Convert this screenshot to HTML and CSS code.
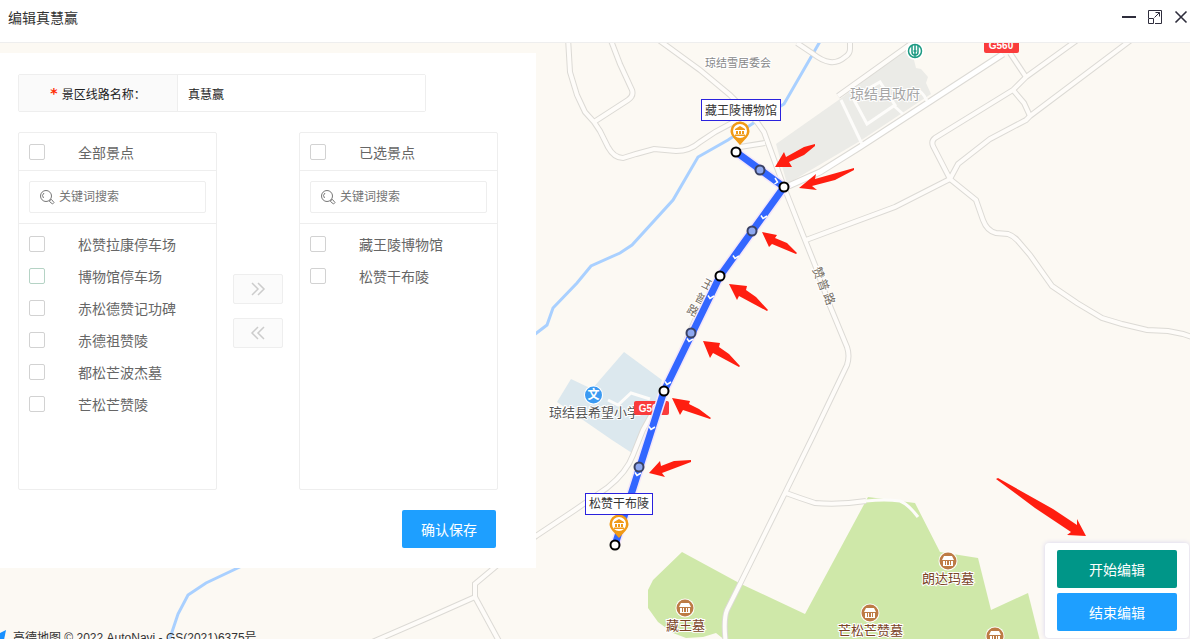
FILE: index.html
```html
<!DOCTYPE html>
<html lang="zh-CN">
  <head>
    <meta charset="UTF-8" />
    <meta name="viewport" content="width=device-width, initial-scale=1.0" />
    <title>编辑真慧赢</title>
    <link rel="stylesheet" href="styles.css">
  </head>
  <body>
    <header class="title_bar">
      <h1>编辑真慧赢</h1>
      <div class="window_btns">
        <button type="button" aria-label="最小化">
          <svg width="16" height="16" viewBox="0 0 16 16"><path d="M1 8h14" stroke-width="2" /></svg>
        </button>
        <button type="button" aria-label="最大化">
          <svg width="16" height="16" viewBox="0 0 16 16"><path d="M1.500 9V1.500h13v13H8M1.500 9.500h5v5h-5zM7.500 8.500l5-5M8.500 3.500h4v4" /></svg>
        </button>
        <button type="button" aria-label="关闭">
          <svg width="16" height="16" viewBox="0 0 16 16"><path d="M2.500 2.500l11 11M13.500 2.500l-11 11" stroke-width="1.600" /></svg>
        </button>
      </div>
    </header>

    <main class="map_area">
      <svg class="map" viewBox="0 43 1190 596" preserveAspectRatio="xMinYMin slice">
        <defs>
          <g id="roads">
            <path d="M568 38L570 72 577 95 585 112 594 122 600 131 608 147Q614 158 623 158L636 154 654 149 676 151 Q690 151 700 142L715 132 745 116" />
            <path d="M610 38L620 64 632 90Q634 96 628 100L594 122" />
            <path d="M656 38L700 70 730 95 757 122 764 132 784 187" />
            <path d="M740 147L765 143" />
            <path d="M797 43L812 53Q822 61 830 62T845 57Q850 54 850 49V38" />
            <path d="M838 96L866 76 912 43" />
            <path d="M1010 53L1026 77" />
            <path d="M1080 38L1026 77 1013 90 935 138Q931 141 933 146L950 179 976 200 983 220Q987 231 996 233L1008 234Q1014 236 1018 241L1030 255 1052 286 1077 303 1102 318 1122 324 1147 330 1168 331 1183 334 1195 338" />
            <path d="M1013 90L1024 103 1030 116" />
            <path d="M1135 37L1030 116 1026 120 990 139 958 164 950 179 895 207 806 240" />
            <path d="M784 187L797 220 815 265 830 306 847 347Q850 356 847 365L812 438 785 493 740 584 727 610Q723 620 726 645" />
            <path d="M786 493L800 498 815 503Q840 505 866 501" />
            <path d="M720 276L695 320 665 390 643 430 633 455Q627 472 607 488L575 510 536 536 500 563 475 584V597L430 617 370 643" />
            <path d="M475 597L500 643" />
          </g>
          <g id="pin">
            <path d="M-9.500 0A9.500 9.500 0 0 1 9.500 0C9.500 5 5 8 0 14-5 8-9.500 5-9.500 0Z" fill="#f09a16" />
            <circle r="7" fill="#fff" />
            <path d="M-5-2L0-5 5-2V-1H-5ZM-4 0h2v3h-2zM-1 0h2v3h-2zM2 0h2v3h-2zM-5 3.500h10v1.500h-10z" fill="#f09a16" />
          </g>
          <g id="tomb">
            <circle r="9.500" fill="#fff" />
            <circle r="8.500" fill="#bd7b45" />
            <path d="M-4-5h8l2 4h-12zM-5 0h2v5h-2zM-2 0h1v5h-1zM1 0h1v5h-1zM3 0h2v5h-2zM-5 4h10v1h-10z" fill="#fff" />
          </g>
          <path id="chevron" d="M-3-1.500L-1 1.500 3-1" />
        </defs>

        <rect y="43" width="1190" height="596" fill="#fcf9f3" />

        <!-- land areas -->
        <path class="block" d="M776 144L840 99 860 84 905 49 913 56 916 68 921 69 928 77 926 83 931 94 860 141 787 184Z" />
        <path class="school" d="M624 352L662 380 655 404 632 453 612 440 557 402 571 379 592 389Z" />
        <path class="park" d="M682 552L653 580 648 590V608L658 622 673 633 686 638 703 637 716 633 726 641H1040L1028 593 991 610 978 558 940 552 915 503 868 497 805 614 741 584Z" />

        <!-- river -->
        <path class="river" d="M822 38L784 104 752 124 728 140 698 157 673 200 632 245 620 253 591 266 577 283 553 308 547 325 530 338" />
        <path class="river" d="M244 565L206 583 188 595 178 614 169 641" />

        <!-- roads -->
        <use href="#roads" class="road_edge" />
        <use href="#roads" class="road_fill" />
        <path class="road_edge main" d="M784 188L820 172 860 147 1003 54" />
        <path class="road_fill main" d="M784 188L820 172 860 147 1003 54" />
        <path class="lane" d="M841 100L862 144M853 98L867 124 895 105 880 82 862 92M893 105L903 114M916 90Q922 90 927 101" />
        <path class="lane" d="M608 400L618 405 631 393 650 399M866 501Q885 499 900 501 908 504 918 517" />

        <!-- place names -->
        <text class="place small" x="705" y="67">琼结雪居委会</text>
        <text class="place gov" x="850" y="99">琼结县政府</text>
        <text class="place dark" x="549" y="417">琼结县希望小学</text>
        <g class="place road_name">
          <text transform="translate(818 273) rotate(70)">赞</text>
          <text transform="translate(823 285) rotate(70)">普</text>
          <text transform="translate(829 299) rotate(70)">路</text>
          <text transform="translate(708 285) rotate(28)">王</text>
          <text transform="translate(701 299) rotate(28)">普</text>
          <text transform="translate(693 311) rotate(28)">路</text>
        </g>

        <g transform="translate(593.500 395)">
          <circle r="9.500" fill="#fff" />
          <circle r="8.500" fill="#3b9af2" />
          <text class="icon_text" y="4">文</text>
        </g>
        <g transform="translate(915 51)">
          <circle r="9" fill="#fff" />
          <circle r="6.500" fill="none" stroke="#1c9a83" stroke-width="1.500" />
          <path d="M-3-6V1Q-3 4 0 4T3 1V-6M0-6V6M-1.500 0h3" fill="none" stroke="#1c9a83" stroke-width="1.500" />
        </g>

        <rect class="road_badge" x="984" y="38" width="35" height="15" rx="2" />
        <text class="badge_text" x="1001" y="49">G560</text>
        <rect class="road_badge" x="634" y="401" width="35" height="14" rx="2" />
        <text class="badge_text" x="651" y="412">G560</text>

        <use href="#tomb" x="685" y="608" />
        <use href="#tomb" x="948" y="561" />
        <use href="#tomb" x="870" y="613" />
        <use href="#tomb" x="995" y="636" />
        <text class="place tomb_name" x="666" y="630">藏王墓</text>
        <text class="place tomb_name" x="922" y="583">朗达玛墓</text>
        <text class="place tomb_name" x="838" y="635">芒松芒赞墓</text>

        <!-- editable route -->
        <path class="route_glow" d="M736 152L784 187 720 276 664 391 615 545" />
        <path class="route" d="M736 152L784 187 720 276 664 391 615 545" />
        <g class="chevrons">
          <use href="#chevron" transform="translate(776 181) rotate(-90)" />
          <use href="#chevron" x="764" y="217" />
          <use href="#chevron" x="736" y="257" />
          <use href="#chevron" x="711" y="297" />
          <use href="#chevron" x="690" y="340" />
          <use href="#chevron" x="668" y="383" />
          <use href="#chevron" x="652" y="428" />
          <use href="#chevron" x="638" y="474" />
        </g>
        <use href="#pin" x="740" y="131" />
        <use href="#pin" x="619" y="524" />
        <g class="mid_points">
          <circle cx="760" cy="170" r="4.500" />
          <circle cx="752" cy="231" r="4.500" />
          <circle cx="691" cy="333" r="4.500" />
          <circle cx="639" cy="467" r="4.500" />
        </g>
        <g class="points">
          <circle cx="736" cy="152" r="4.500" />
          <circle cx="784" cy="187" r="4.500" />
          <circle cx="720" cy="276" r="4.500" />
          <circle cx="664" cy="391" r="4.500" />
          <circle cx="615" cy="545" r="4.500" />
        </g>
        <rect class="tag" x="701.500" y="99.500" width="79" height="21" />
        <text class="tag_text" x="705" y="115">藏王陵博物馆</text>
        <rect class="tag" x="585.500" y="493.500" width="67" height="21" />
        <text class="tag_text" x="589" y="508">松赞干布陵</text>

        <!-- red arrows -->
        <g class="arrows">
          <path d="M775 167L784 152 786 157 804 147 815 144 815 146 804 155 789 162 792 167Z" />
          <path d="M799 188L816 174 815 179 854 168 854 170 835 180 812 186 817 190Z" />
          <path d="M762 232L777 235 775 238 787 243 797 253 796 254 772 244 769 247Z" />
          <path d="M729 284L747 286 746 290 756 297 768 310 767 311 739 296 737 300Z" />
          <path d="M703 341L720 343 719 347 729 354 740 366 739 367 713 353 710 358Z" />
          <path d="M672 398L690 401 689 404 699 409 711 418 710 419 683 410 680 415Z" />
          <path d="M649 473L660 461 661 466 674 461 691 460 691 462 662 473 665 477Z" />
          <path d="M1086 536L1077 519 1077 525 1053 509 998 478 996 479 1035 508 1071 532 1067 535Z" />
        </g>

        <path d="M0 633L6 630 4 640H0Z" fill="#1890ff" />
        <text class="copyright" x="13" y="642">高德地图 © 2022 AutoNavi - GS(2021)6375号</text>
      </svg>

      <form class="edit_panel">
        <div class="name_row">
          <label for="line_name"><span class="must">*</span>景区线路名称：</label>
          <input type="text" id="line_name" name="line_name" value="真慧赢" />
        </div>

        <div class="transfer">
          <section class="transfer_box">
            <label class="item box_head"><input type="checkbox" />全部景点</label>
            <div class="search_row">
              <div class="search_box">
                <svg width="16" height="16" viewBox="0 0 16 16"><circle cx="7" cy="7" r="5.500" /><path d="M4.500 9A3.500 3.500 0 0 1 5 4M11 11l1.500-.5 2.500 3-1.500 1.500-3-2.500z" /></svg>
                <input type="text" placeholder="关键词搜索" aria-label="搜索全部景点" />
              </div>
            </div>
            <ul>
              <li><label class="item"><input type="checkbox" />松赞拉康停车场</label></li>
              <li><label class="item"><input type="checkbox" class="active" />博物馆停车场</label></li>
              <li><label class="item"><input type="checkbox" />赤松德赞记功碑</label></li>
              <li><label class="item"><input type="checkbox" />赤德祖赞陵</label></li>
              <li><label class="item"><input type="checkbox" />都松芒波杰墓</label></li>
              <li><label class="item"><input type="checkbox" />芒松芒赞陵</label></li>
            </ul>
          </section>

          <div class="transfer_btns">
            <button type="button" disabled aria-label="添加">
              <svg width="16" height="16" viewBox="0 0 16 16"><path d="M2 2l6 6-6 6M8 2l6 6-6 6" /></svg>
            </button>
            <button type="button" disabled aria-label="移除">
              <svg width="16" height="16" viewBox="0 0 16 16"><path d="M8 2L2 8l6 6M14 2L8 8l6 6" /></svg>
            </button>
          </div>

          <section class="transfer_box">
            <label class="item box_head"><input type="checkbox" />已选景点</label>
            <div class="search_row">
              <div class="search_box">
                <svg width="16" height="16" viewBox="0 0 16 16"><circle cx="7" cy="7" r="5.500" /><path d="M4.500 9A3.500 3.500 0 0 1 5 4M11 11l1.500-.5 2.500 3-1.500 1.500-3-2.500z" /></svg>
                <input type="text" placeholder="关键词搜索" aria-label="搜索已选景点" />
              </div>
            </div>
            <ul>
              <li><label class="item"><input type="checkbox" />藏王陵博物馆</label></li>
              <li><label class="item"><input type="checkbox" />松赞干布陵</label></li>
            </ul>
          </section>
        </div>

        <div class="save_row">
          <button type="submit" class="btn blue">确认保存</button>
        </div>
      </form>

      <div class="draw_tools">
        <button type="button" class="btn green">开始编辑</button>
        <button type="button" class="btn blue">结束编辑</button>
      </div>
    </main>
  </body>
</html>
```

FILE: styles.css
```css
* {
  margin: 0;
  padding: 0;
  box-sizing: border-box;
  list-style-type: none;
}
body {
  height: 100vh;
  display: flex;
  flex-direction: column;
  overflow: hidden;
  background-color: #fff;
  color: #333;
  font-family: 'Liberation Sans', 'Noto Sans CJK SC', sans-serif;
  font-size: 14px;
}
button,
input {
  font-family: inherit;
}

/* title bar */
.title_bar {
  display: flex;
  justify-content: space-between;
  align-items: center;
  height: 43px;
  padding: 0 1px 8px 8px;
  border-bottom: 1px solid #eee;
}
.title_bar h1 {
  font-size: 14px;
  font-weight: 400;
}
.window_btns {
  display: flex;
  gap: 10px;
}
.window_btns button {
  width: 16px;
  height: 16px;
  border: none;
  background: none;
}
.window_btns svg {
  display: block;
  fill: none;
  stroke: #2e2d3c;
}

/* map */
.map_area {
  position: relative;
  flex: 1;
  min-height: 0;
  overflow: hidden;
}
.map {
  position: absolute;
  top: 0;
  left: 0;
  width: 100%;
  height: 100%;
}
.block {
  fill: #ebebe7;
}
.school {
  fill: #dce8ee;
}
.park {
  fill: #cfe8a9;
}
.river {
  fill: none;
  stroke: #a9d0ff;
  stroke-width: 3;
}
.road_edge {
  fill: none;
  stroke: #dcdad5;
  stroke-width: 6;
}
.road_fill {
  fill: none;
  stroke: #fefcf9;
  stroke-width: 4;
}
.road_edge.main {
  stroke-width: 7;
}
.road_fill.main {
  stroke: #fff;
  stroke-width: 5;
}
.lane {
  fill: none;
  stroke: #fdfcfa;
  stroke-width: 3;
}
.place {
  font-size: 13px;
  paint-order: stroke;
  stroke: #fff;
  stroke-width: 2px;
}
.place.small {
  font-size: 11px;
  fill: #888;
}
.place.gov {
  font-size: 14px;
  fill: #a5a5a5;
}
.place.dark {
  fill: #555;
}
.place.road_name {
  font-size: 12px;
  fill: #777064;
  text-anchor: middle;
  dominant-baseline: central;
}
.tomb_name {
  fill: #7a4426;
}
.icon_text {
  font-size: 12px;
  font-weight: 700;
  fill: #fff;
  text-anchor: middle;
}
.road_badge {
  fill: #fa3c3c;
}
.badge_text {
  font-size: 10px;
  font-weight: 700;
  fill: #fff;
  text-anchor: middle;
}
.route_glow {
  fill: none;
  stroke: #f3e6fa;
  stroke-width: 10;
}
.route {
  fill: none;
  stroke: #3366ff;
  stroke-width: 7;
}
.chevrons {
  fill: none;
  stroke: #fff;
  stroke-width: 1.5;
}
.points {
  fill: #fff;
  stroke: #000;
  stroke-width: 2;
}
.mid_points {
  fill: #8ea8f0;
  stroke: #3a4264;
  stroke-width: 2;
}
.tag {
  fill: #fff;
  stroke: #2a22dd;
}
.tag_text {
  font-size: 12px;
  fill: #333;
}
.arrows {
  fill: #ff1e10;
}
.copyright {
  font-size: 12px;
  fill: #333;
}

/* edit panel */
.edit_panel {
  position: relative;
  width: 536px;
  max-width: 100%;
  margin-top: 10px;
  padding: 21px 38px 20px 18px;
  background-color: #fff;
}
.name_row {
  display: flex;
  width: 408px;
  height: 38px;
  border: 1px solid #eee;
  border-radius: 2px;
  font-size: 12px;
}
.name_row label {
  display: flex;
  align-items: center;
  justify-content: center;
  width: 159px;
  border-right: 1px solid #eee;
  background-color: #fafafa;
  color: #222;
}
.must {
  margin-right: 4px;
  color: #ff2a00;
  font-family: 'DejaVu Sans', sans-serif;
  font-size: 14px;
  font-weight: 700;
}
.name_row input {
  flex: 1;
  min-width: 0;
  padding-left: 10px;
  border: none;
  font-size: 12px;
  color: #222;
}
.transfer {
  display: flex;
  justify-content: space-between;
  margin-top: 20px;
}
.transfer_box {
  width: 199px;
  height: 358px;
  border: 1px solid #eee;
  border-radius: 2px;
}
.item {
  display: flex;
  align-items: center;
  gap: 33px;
  height: 32px;
  padding-left: 10px;
  color: #666;
}
.box_head {
  height: 38px;
  border-bottom: 1px solid #eee;
}
.item input {
  appearance: none;
  width: 16px;
  height: 16px;
  border: 1px solid #d2d2d2;
  border-radius: 2px;
  background-color: #fff;
}
.item input.active {
  border-color: #b5d3c5;
}
.search_row {
  padding: 10px;
  border-bottom: 1px solid #eee;
}
.search_box {
  display: flex;
  align-items: center;
  gap: 4px;
  height: 32px;
  padding-left: 9px;
  border: 1px solid #eee;
  border-radius: 2px;
}
.search_box svg {
  flex: none;
  fill: none;
  stroke: #777;
}
.search_box input {
  width: 100%;
  min-width: 0;
  border: none;
  font-size: 12px;
}
.search_box input::placeholder {
  color: #757575;
}
.transfer_box ul {
  padding: 4px 0;
}
.transfer_btns {
  display: flex;
  flex-direction: column;
  justify-content: center;
  gap: 14px;
}
.transfer_btns button {
  width: 50px;
  height: 30px;
  border: 1px solid #eee;
  border-radius: 2px;
  background-color: #fbfbfb;
}
.transfer_btns svg {
  display: block;
  margin: 0 auto;
  fill: none;
  stroke: #ccc;
  stroke-width: 1.5;
}
.btn {
  height: 38px;
  padding: 0 19px;
  border: none;
  border-radius: 2px;
  color: #fff;
  font-size: 14px;
}
.blue {
  background-color: #1e9fff;
}
.green {
  background-color: #009688;
}
.save_row {
  display: flex;
  justify-content: flex-end;
  margin-top: 20px;
  padding-right: 2px;
}

/* drawing tools */
.draw_tools {
  position: absolute;
  right: 1px;
  bottom: 1px;
  display: flex;
  flex-direction: column;
  gap: 5px;
  width: 144px;
  padding: 7px 12px;
  border-radius: 4px;
  background-color: #fff;
  box-shadow: 0 0 5px #d5d2ee;
}
```
